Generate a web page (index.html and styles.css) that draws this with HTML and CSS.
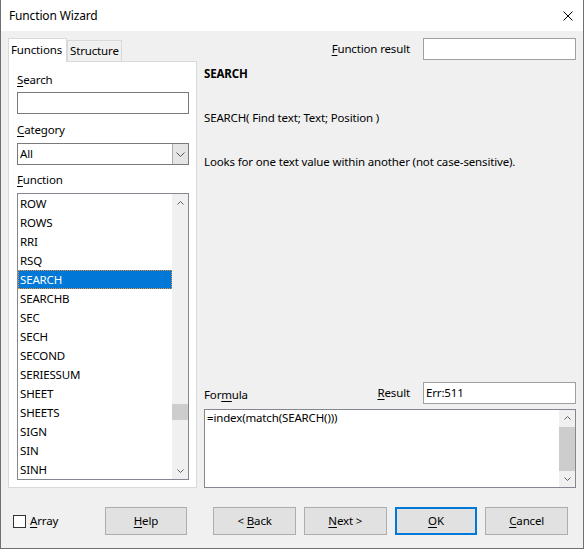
FILE: index.html
```html
<!DOCTYPE html>
<html lang="en">
<head>
    <meta charset="UTF-8">
    <title>Function Wizard</title>
    <link rel="stylesheet" href="styles.css">
</head>
<body>
<div class="window">
    <div class="titlebar">
        <span>Function Wizard</span>
        <svg class="close" width="10" height="10" viewBox="0 0 10 10">
            <path d="M0.5 0.5L9.5 9.5M9.5 0.5L0.5 9.5" stroke="#000" stroke-width="1" fill="none"/>
        </svg>
    </div>
    <div class="content">
        <div class="main">
            <div class="left">
                <div class="tabs">
                    <div class="tab active">Functions</div>
                    <div class="tab">Structure</div>
                </div>
                <div class="panel">
                    <div class="label lbl_search"><u>S</u>earch</div>
                    <div class="field search_box"></div>
                    <div class="label lbl_cat"><u>C</u>ategory</div>
                    <div class="field select_box">
                        <span class="select_val">All</span>
                        <span class="drop_btn">
                            <svg width="9" height="5" viewBox="0 0 9 5"><path d="M0.5 0.5L4.5 4.5L8.5 0.5" stroke="#555" fill="none"/></svg>
                        </span>
                    </div>
                    <div class="label lbl_func"><u>F</u>unction</div>
                    <div class="list_box">
                        <div class="items">
                            <div class="item">ROW</div>
                            <div class="item">ROWS</div>
                            <div class="item">RRI</div>
                            <div class="item">RSQ</div>
                            <div class="item selected">SEARCH</div>
                            <div class="item">SEARCHB</div>
                            <div class="item">SEC</div>
                            <div class="item">SECH</div>
                            <div class="item">SECOND</div>
                            <div class="item">SERIESSUM</div>
                            <div class="item">SHEET</div>
                            <div class="item">SHEETS</div>
                            <div class="item">SIGN</div>
                            <div class="item">SIN</div>
                            <div class="item">SINH</div>
                        </div>
                        <div class="vscroll">
                            <div class="arrow">
                                <svg width="7" height="4" viewBox="0 0 7 4"><path d="M0.5 3.5L3.5 0.5L6.5 3.5" stroke="#606060" fill="none"/></svg>
                            </div>
                            <div class="track"><div class="thumb list_thumb"></div></div>
                            <div class="arrow">
                                <svg width="7" height="4" viewBox="0 0 7 4"><path d="M0.5 0.5L3.5 3.5L6.5 0.5" stroke="#606060" fill="none"/></svg>
                            </div>
                        </div>
                    </div>
                </div>
            </div>
            <div class="right">
                <div class="res_row">
                    <span class="label"><u>F</u>unction result</span>
                    <div class="field res_box"></div>
                </div>
                <div class="fname">SEARCH</div>
                <div class="fsyntax">SEARCH( Find text; Text; Position )</div>
                <div class="fdesc">Looks for one text value within another (not case-sensitive).</div>
                <div class="formula_row">
                    <span class="label lbl_formula">For<u>m</u>ula</span>
                    <div class="res_group">
                        <span class="label"><u>R</u>esult</span>
                        <div class="field res_box">Err:511</div>
                    </div>
                </div>
                <div class="formula_box">
                    <div class="formula_text">=index(match(SEARCH()))</div>
                    <div class="vscroll">
                        <div class="arrow">
                            <svg width="7" height="4" viewBox="0 0 7 4"><path d="M0.5 3.5L3.5 0.5L6.5 3.5" stroke="#606060" fill="none"/></svg>
                        </div>
                        <div class="track"><div class="thumb formula_thumb"></div></div>
                        <div class="arrow">
                            <svg width="7" height="4" viewBox="0 0 7 4"><path d="M0.5 0.5L3.5 3.5L6.5 0.5" stroke="#606060" fill="none"/></svg>
                        </div>
                    </div>
                </div>
            </div>
        </div>
        <div class="footer">
            <div class="check_group">
                <span class="checkbox"></span>
                <span class="label"><u>A</u>rray</span>
            </div>
            <a href="javascript:;" class="btn"><u>H</u>elp</a>
            <a href="javascript:;" class="btn btn_back">&lt; <u>B</u>ack</a>
            <a href="javascript:;" class="btn"><u>N</u>ext &gt;</a>
            <a href="javascript:;" class="btn btn_ok"><u>O</u>K</a>
            <a href="javascript:;" class="btn"><u>C</u>ancel</a>
        </div>
    </div>
</div>
</body>
</html>
```

FILE: styles.css
```css
*{
    margin:0;
    padding:0;
    box-sizing:border-box;
    text-decoration:none;
}
body{
    font-family:"Noto Sans","Liberation Sans",sans-serif;
    font-size:11.5px;
    letter-spacing:-0.15px;
    color:#000;
    background:#fff;
}
u{
    text-decoration:underline;
    text-underline-offset:2px;
}
.window{
    width:584px;
    height:549px;
    border:1px solid #707070;
    border-top:0;
    display:flex;
    flex-direction:column;
}
.titlebar{
    height:31px;
    padding:0 10px 0 8px;
    display:flex;
    align-items:center;
    justify-content:space-between;
    background:#fff;
    font-size:12px;
}
.content{
    flex:1;
    background:#f0f0f0;
    padding:7px 7px 0 7px;
    display:flex;
    flex-direction:column;
}
.main{
    height:450px;
    display:flex;
}
.left{
    width:189px;
    display:flex;
    flex-direction:column;
}
.tabs{
    height:23px;
    display:flex;
    align-items:flex-end;
}
.tab{
    height:21px;
    line-height:19px;
    padding:0 2px;
    border:1px solid #d9d9d9;
    border-bottom:0;
    background:#f0f0f0;
    width:55px;
}
.tab.active{
    width:59px;
    height:24px;
    margin-bottom:-1px;
    line-height:22px;
    background:#fff;
    position:relative;
    z-index:1;
}
.panel{
    flex:1;
    background:#fff;
    border:1px solid #d9d9d9;
    padding:0 7px 0 8px;
}
.label{
    line-height:16px;
}
.lbl_search{
    margin-top:10px;
}
.lbl_cat{
    margin-top:8px;
}
.lbl_func{
    margin-top:7px;
}
.field{
    height:22px;
    border:1px solid #a0a0a0;
    background:#fff;
    line-height:20px;
    padding-left:2px;
}
.search_box{
    margin-top:4px;
    border-color:#7a7a7a;
}
.select_box{
    margin-top:5px;
    border-color:#7a7a7a;
    display:flex;
    padding-left:0;
}
.select_val{
    flex:1;
    padding-left:2px;
}
.drop_btn{
    width:16px;
    background:#e5e5e5;
    border-left:1px solid #acacac;
    display:flex;
    align-items:center;
    justify-content:center;
}
.list_box{
    margin-top:5px;
    height:287px;
    border:1px solid #828790;
    display:flex;
}
.items{
    flex:1;
}
.item{
    height:19px;
    line-height:19px;
    padding-left:2px;
}
.item.selected{
    background:#0078d7;
    color:#fff;
    border:1px dotted #f09030;
    line-height:17px;
    padding-left:1px;
}
.vscroll{
    width:16px;
    background:#f0f0f0;
    display:flex;
    flex-direction:column;
}
.arrow{
    height:17px;
    display:flex;
    align-items:center;
    justify-content:center;
}
.track{
    flex:1;
}
.thumb{
    background:#cdcdcd;
}
.list_thumb{
    margin-top:193px;
    height:16px;
}
.formula_thumb{
    height:44px;
}
.right{
    flex:1;
    padding-left:7px;
    display:flex;
    flex-direction:column;
}
.res_row{
    height:22px;
    display:flex;
    justify-content:flex-end;
    align-items:center;
    gap:13px;
}
.res_box{
    width:153px;
}
.fname{
    margin-top:6px;
    line-height:16px;
    font-weight:bold;
}
.fsyntax,.fdesc{
    margin-top:28px;
    line-height:16px;
}
.formula_row{
    margin-top:auto;
    display:flex;
    justify-content:space-between;
    align-items:flex-end;
}
.lbl_formula{
    margin-bottom:1px;
}
.res_group{
    display:flex;
    align-items:center;
    gap:13px;
}
.formula_box{
    margin-top:5px;
    height:79px;
    border:1px solid #828790;
    background:#fff;
    display:flex;
}
.formula_text{
    flex:1;
    padding-left:2px;
    line-height:16px;
}
.footer{
    flex:1;
    display:flex;
    align-items:flex-start;
    padding-top:19px;
}
.check_group{
    width:97px;
    height:28px;
    padding-left:5px;
    display:flex;
    align-items:center;
    gap:4px;
}
.checkbox{
    width:13px;
    height:13px;
    border:1px solid #333;
    background:#fff;
}
.btn{
    width:83px;
    height:28px;
    line-height:26px;
    text-align:center;
    color:#000;
    background:#e1e1e1;
    border:1px solid #adadad;
    margin-right:8px;
}
.btn_back{
    margin-left:18px;
}
.btn_ok{
    border:2px solid #0078d7;
    line-height:24px;
}
```
